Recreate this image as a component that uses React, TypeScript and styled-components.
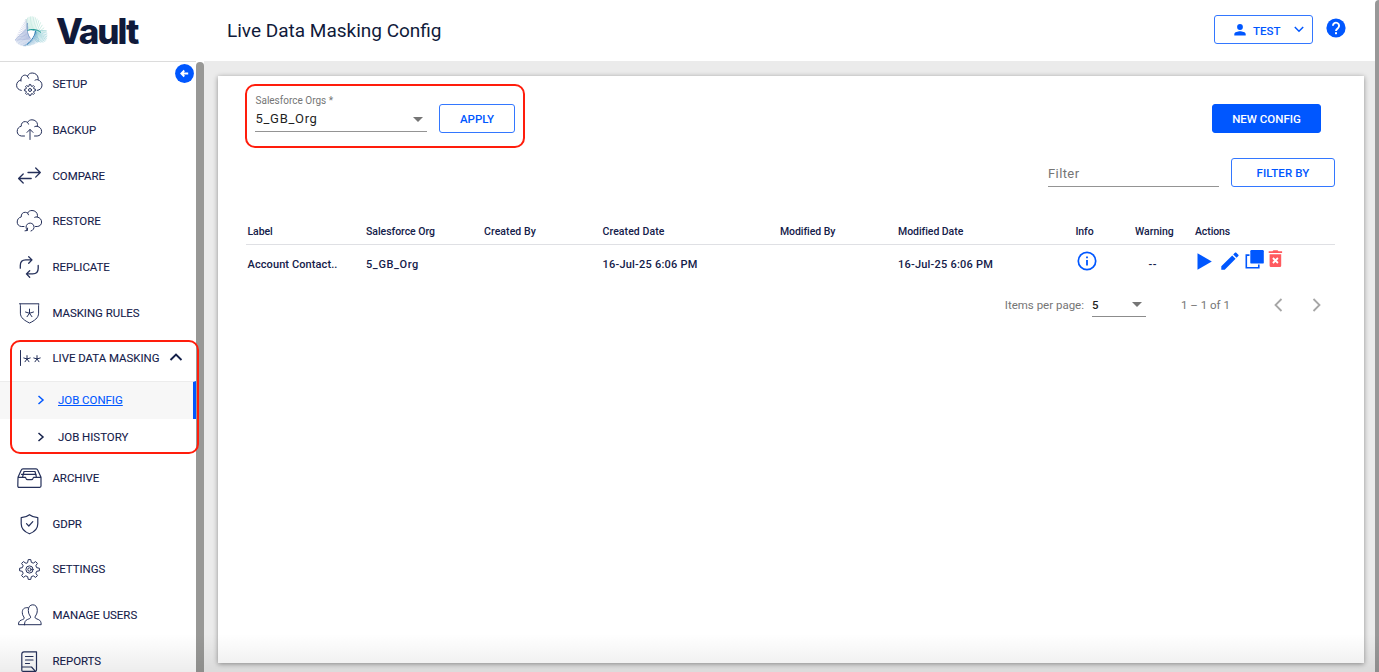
import React from 'react';
import styled, { createGlobalStyle } from 'styled-components';

const navy = '#14204a';
const dark = '#101a3a';
const blue = '#0057ff';

const Global = createGlobalStyle`
  * { box-sizing: border-box; }
  body { margin: 0; background: #fff; font-family: Roboto, sans-serif; color: ${navy}; overflow: hidden; }
  svg { display: block; flex: none; }
`;

const Page = styled.div`
  position: relative;
  display: flex;
  width: 1379px;
  height: 672px;
  overflow: hidden;
`;
const Shell = styled.div`
  flex: 1;
  display: flex;
  flex-direction: column;
  min-width: 0;
`;
const PageScrollbar = styled.div`
  width: 4px;
  background: #989898;
  border-top-left-radius: 4px;
`;

/* header */
const Header = styled.header`
  height: 61px;
  flex: none;
  display: flex;
  align-items: center;
  background: #fff;
`;
const Brand = styled.div`
  width: 227px;
  display: flex;
  align-items: center;
  gap: 7px;
  padding-left: 15px;
  color: ${dark};
`;
const BrandName = styled.span`
  padding-top: 1px;
  font: 800 35px/39px Inter, sans-serif;
  letter-spacing: -2px;
`;
const Title = styled.h1`
  margin: 0;
  font-weight: 400;
  font-size: 19px;
  line-height: 24px;
  flex: 1;
  color: ${dark};
`;
const UserButton = styled.button`
  width: 99px;
  height: 29px;
  margin: 0 13px 2px 0;
  padding: 0 8px 0 18px;
  display: flex;
  align-items: center;
  background: #fff;
  border: 1px solid #3377ff;
  border-radius: 3px;
  color: ${blue};
  font: 500 11.5px/14px Roboto, sans-serif;
`;
const UserName = styled.span`
  flex: 1;
  padding: 2px 0 0 6px;
  text-align: left;
`;
const Help = styled.div`
  margin: 0 29px 5px 0;
`;

/* sidebar */
const Body = styled.div`
  flex: 1;
  display: flex;
  min-height: 0;
`;
const Sidebar = styled.nav`
  position: relative;
  width: 196px;
  border-top: 1px solid #dcdcdc;
  background: #fff;
  overflow: hidden;
`;
const SideScrollbar = styled.div`
  width: 8px;
  margin-top: 1px;
  background: #989896;
  border-radius: 4px 4px 0 0;
`;
const NavItem = styled.div`
  height: 45.7px;
  display: flex;
  align-items: center;
  padding-left: 15px;
  font-size: 11.43px;
  line-height: 14px;
  -webkit-text-stroke: 0.1px ${navy};
`;
const NavList = styled.div`
  margin-top: -0.6px;
`;
const NavIcon = styled.span`
  width: 28px;
  margin-right: 9.4px;
`;
const Caret = styled.span`
  margin: -2px 0 0 9px;
`;
const SubItem = styled.div<{ $active?: boolean }>`
  height: ${p => (p.$active ? 38 : 35.9)}px;
  display: flex;
  align-items: center;
  gap: 13px;
  padding-left: 37px;
  font-size: 11.43px;
  line-height: 14px;
  color: ${p => (p.$active ? blue : navy)};
  background: ${p => (p.$active ? '#f7f7f7' : 'transparent')};
  border-top: ${p => (p.$active ? '1px solid #ececec' : 'none')};
  border-right: ${p => (p.$active ? `3px solid ${blue}` : 'none')};
  text-decoration: ${p => (p.$active ? 'underline' : 'none')};
  text-underline-offset: 1px;
  padding-bottom: ${p => (p.$active ? 1 : 0)}px;
  -webkit-text-stroke: 0.1px currentColor;
`;
const Collapse = styled.div`
  position: absolute;
  right: 2px;
  top: 2px;
`;

/* content */
const Main = styled.main`
  flex: 1;
  padding: 15px 11px 9px 14px;
  background: #ebebeb;
  display: flex;
`;
const Card = styled.section`
  flex: 1;
  background: #fff;
  box-shadow: 0 1px 5px rgba(0, 0, 0, 0.4);
  display: flex;
  flex-direction: column;
`;
const OrgRow = styled.div`
  height: 57px;
  padding: 0 43px 0 37px;
  display: flex;
  align-items: flex-end;
`;
const Button = styled.button<{ $w: number; $solid?: boolean; $ls?: number }>`
  width: ${p => p.$w}px;
  height: 29px;
  padding: 1px 0 0;
  border: 1px solid ${p => (p.$solid ? blue : '#3377ff')};
  border-radius: 3px;
  background: ${p => (p.$solid ? blue : '#fff')};
  color: ${p => (p.$solid ? '#fff' : blue)};
  font: 500 11.5px/14px Roboto, sans-serif;
  letter-spacing: ${p => p.$ls ?? 0}px;
`;
const OrgField = styled.div`
  width: 172px;
  height: 39px;
  margin: 0 12px 1px 0;
  padding-left: 0.5px;
  border-bottom: 1px solid #949494;
  display: flex;
  flex-direction: column;
`;
const FieldLabel = styled.span`
  padding-top: 1px;
  font-size: 10px;
  line-height: 14px;
  color: #757575;
`;
const OrgValue = styled.div`
  display: flex;
  align-items: center;
  justify-content: space-between;
  padding: 3px 4px 0 0;
  font-size: 13px;
  line-height: 16px;
  letter-spacing: 0.7px;
  color: #1f1f1f;
`;
const Grow = styled.div`
  flex: 1;
`;
const FilterRow = styled.div`
  margin-top: 25px;
  padding-right: 29px;
  display: flex;
  justify-content: flex-end;
  gap: 12px;
`;
const FilterField = styled.div`
  width: 171px;
  height: 29px;
  padding-top: 7px;
  border-bottom: 1px solid #949494;
  font-size: 13px;
  line-height: 17px;
  letter-spacing: 0.4px;
  color: #757575;
`;
const Table = styled.div`
  margin: 30px 29px 0 28px;
`;
const Row = styled.div<{ $head?: boolean }>`
  display: grid;
  grid-template-columns: 118.5px 118px 118.5px 177.5px 118px 177.5px 59.500px 60px 1fr;
  padding-left: 1.5px;
  height: ${p => (p.$head ? 28 : 38)}px;
  border-bottom: ${p => (p.$head ? '1.5px solid #dfe0e4' : 'none')};
  font-weight: 500;
  font-size: ${p => (p.$head ? 10.5 : 11)}px;
  line-height: ${p => (p.$head ? 29 : 39)}px;
`;
const Cell = styled.span<{ $ls?: number }>`
  letter-spacing: ${p => p.$ls ?? 0}px;
  white-space: nowrap;
`;
const InfoCell = styled.span`
  padding: 6px 0 0 1px;
`;
const WarnCell = styled.span`
  padding-left: 13.5px;
  letter-spacing: 0.5px;
`;
const Actions = styled.span`
  display: flex;
  align-items: flex-start;
  padding: 4px 0 0 2px;
`;
const Paginator = styled.div`
  margin-top: 10px;
  padding-right: 43px;
  height: 24px;
  display: flex;
  justify-content: flex-end;
  align-items: center;
  font-size: 11.5px;
  line-height: 14px;
  color: #757575;
`;
const PageSize = styled.span`
  width: 54px;
  height: 23px;
  margin: 0 35px 0 8px;
  padding-right: 4px;
  display: flex;
  align-items: center;
  justify-content: space-between;
  border-bottom: 1px solid #8c8c8c;
  color: #1f1f1f;
  font-weight: 500;
`;
const Range = styled.span`
  width: 93px;
`;
const Arrows = styled.span`
  display: flex;
  gap: 29px;
  color: #a6a6a6;
`;
const BottomFade = styled.div`
  position: absolute;
  left: 0;
  right: 0;
  bottom: 0;
  height: 38px;
  background: linear-gradient(rgba(0, 0, 0, 0), rgba(0, 0, 0, 0.07));
`;
const Highlight = styled.div<{ $x: number; $y: number; $w: number; $h: number; $r: number }>`
  position: absolute;
  left: ${p => p.$x}px;
  top: ${p => p.$y}px;
  width: ${p => p.$w}px;
  height: ${p => p.$h}px;
  border: 2px solid #ff1d0c;
  border-radius: ${p => p.$r}px;
`;

const Line = ({ children, w = 1 }: { children: React.ReactNode; w?: number }) => (
  <svg width="28" height="28" viewBox="0 0 28 28" fill="none" stroke="#25305a" strokeWidth={w} strokeLinecap="round" strokeLinejoin="round">
    {children}
  </svg>
);

const gear = (cx: number, cy: number, r1: number, r2: number, n: number) => {
  const pts: string[] = [];
  for (let i = 0; i < n; i++) {
    [[-0.32, r1], [-0.16, r2], [0.16, r2], [0.32, r1]].forEach(([o, r]) => {
      const a = ((i + o) / n) * 2 * Math.PI - Math.PI / 2;
      pts.push(`${(cx + r * Math.cos(a)).toFixed(2)} ${(cy + r * Math.sin(a)).toFixed(2)}`);
    });
  }
  return `M${pts.join('L')}Z`;
};

const star = (cx: number, cy: number, r: number) =>
  [0, 1, 2, 3, 4]
    .map(i => {
      const a = (i / 5) * 2 * Math.PI - Math.PI / 2;
      return `M${cx} ${cy}L${(cx + r * Math.cos(a)).toFixed(2)} ${(cy + r * Math.sin(a)).toFixed(2)}`;
    })
    .join('');

const icons: Record<string, React.ReactNode> = {
  setup: (
    <Line>
      <path d="M6.300 20.400C3.600 19.900 1.600 18.200 1.600 15.300c0-2.900 2-4.800 4.300-5.200C6 6.600 8.300 4.800 10.600 5.200c.8.2 1.400.6 1.800 1.100C13.500 4 15 3 17.200 3c3.200 0 5.600 2 6 5.200 0 .6-.1 1.100-.3 1.600 2.400.8 4.100 2.800 4.100 5.300 0 3-2 4.900-4.700 5.300" />
      <path d="M12.400 6.300c.6.500 1 1.200 1.200 1.900M20 10.200c.9-.6 1.900-.7 2.900-.4M5.900 10.100l.1 1" />
      <path d={gear(15, 20, 4.2, 5.6, 8)} />
      <circle cx="15" cy="20" r="1.500" />
    </Line>
  ),
  backup: (
    <Line>
      <path d="M9.500 20H6.300C3.700 19.700 2.200 17.700 2.200 15.300c0-2.700 1.700-4.600 4-5-.2-3 1.800-5 4.200-4.700.9.1 1.600.4 2.100.8C13.500 4.600 15 3.800 17 3.800c3 0 5.300 2 5.500 4.800 0 .6-.1 1.200-.3 1.700 2.700.6 4.400 2.600 4.400 5 0 2.700-1.800 4.500-4.400 4.700h-2.700" />
      <path d="M12.500 6.400c.5.500.8 1 1 1.700M19.700 10.600c.8-.4 1.600-.5 2.500-.3" />
      <path d="M15 23.500v-9.800M12 16.400l3-3 3 3" />
    </Line>
  ),
  compare: (
    <Line w={1.3}>
      <path d="M13 10.500h12.300M20.700 6l4.600 4.500-4.600 4.600M16.200 16.500H3.800M8.200 12l-4.600 4.500L8.200 21" />
    </Line>
  ),
  restore: (
    <Line>
      <path d="M9 19.500H6.300C3.700 19.200 2.200 17.400 2.200 15c0-2.700 1.700-4.600 4-5-.2-3 1.800-5 4.200-4.700.9.1 1.600.4 2.100.8C13.500 4.300 15 3.500 17 3.500c3 0 5.300 2 5.500 4.800 0 .6-.1 1.200-.3 1.700 2.700.6 4.400 2.600 4.400 5 0 2.700-1.800 4.300-4.400 4.500h-1.700" />
      <path d="M12.500 6.100c.5.500.8 1 1 1.700M19.700 10.300c.8-.4 1.600-.5 2.500-.3" />
      <path d="M16 24a4 4 0 1 0-4.600-2.300l.8 1.600M10 23.800l2.300-.3.300-2.400" />
    </Line>
  ),
  replicate: (
    <Line w={1.3}>
      <path d="M5.300 15.200v-2.700c0-3.800 2-5.600 5.500-5.600h6M13.700 3.700l3.300 3.200-3.300 3.300M23.200 12.500v2.800c0 3.800-2 5.600-5.500 5.600h-6M14.700 17.700l-3.300 3.200 3.300 3.300" />
    </Line>
  ),
  mask: (
    <Line>
      <path d="M5 4.800h19c-.2.400-.4 1-.4 1.800v7.600c0 4.700-4.300 7.600-9 9.800-4.700-2.200-9.200-5.100-9.200-9.800V6.600c0-.8-.2-1.400-.4-1.800Z" />
      <path d={star(14.5, 14.3, 4.2)} />
    </Line>
  ),
  live: (
    <Line>
      <path d={`M5.500 6.500v15${star(12, 15, 3.4)}${star(22, 15, 3.4)}`} />
    </Line>
  ),
  archive: (
    <Line w={1.2}>
      <path d="M3 13.300h7.500c.4 1.700 1.200 2.300 2.300 2.300h3.400c1.100 0 1.900-.6 2.300-2.300H26v8.800c0 .7-.5 1.200-1.200 1.200H4c-.7 0-1.200-.5-1.200-1.200ZM3 13.300 6.300 6c.3-.8.8-1.200 1.600-1.200h13.200c.8 0 1.300.4 1.600 1.200l3.300 7.300M7.700 12.500 9 7.500h11l1.300 5M6.500 10.300h1.700M8.500 10.300h12.700" />
    </Line>
  ),
  gdpr: (
    <Line w={1.2}>
      <path d="M14.500 4.700c2.400 1.900 5 2.800 8.300 3v6c0 4.700-3.300 8.100-8.300 10.100-5-2-8.300-5.400-8.300-10.100v-6c3.300-.2 5.900-1.100 8.300-3Z" />
      <path d="m11.500 13.700 2.300 2.300 4-4.300" />
    </Line>
  ),
  settings: (
    <Line>
      <path d={gear(14.5, 14.5, 7.4, 10, 8)} />
      <circle cx="14.500" cy="14.500" r="3.600" />
      <circle cx="14.500" cy="14.500" r="1.700" />
    </Line>
  ),
  users: (
    <Line>
      <path d="M9.500 23.700h16.700c-.1-3-.8-4.300-2.900-5.200-1.900-.8-3.300-1.100-3.300-2.300 0-1.400 2.300-2.500 2.300-6.700 0-3.600-1.700-5.700-4.500-5.700s-4.500 2.100-4.500 5.700c0 4.200 2.300 5.300 2.300 6.700 0 1.200-1.300 1.500-3.200 2.300-2.100.9-2.800 2.200-2.900 5.200Z" />
      <path d="M12.800 6.700c-3.800-.5-5.600 1.600-5.500 5 .1 3.300 1.900 3.900 1.900 5.300 0 1.200-1.300 1.400-2.900 2.100-2.200.9-2.700 2-2.800 4.600h6" />
    </Line>
  ),
  reports: (
    <Line w={1.2}>
      <path d="M9 4.800h12.500v18c0 .8-.3 1.500-1 1.500L16.500 20H6.800V7c0-1.400.8-2.200 2.200-2.200ZM6.800 20v3.200c0 .8.500 1.200 1.200 1.200h12.500M10.500 9.500h7.500M10.500 13h7.500M10.500 16.500h4" />
    </Line>
  ),
};

const Item = ({ icon, children }: { icon: string; children: React.ReactNode }) => (
  <NavItem>
    <NavIcon>{icons[icon]}</NavIcon>
    {children}
  </NavItem>
);

const Chevron = ({ d, w, h, sw = 1.5 }: { d: string; w: number; h: number; sw?: number }) => (
  <svg width={w} height={h} viewBox={`0 0 ${w} ${h}`} fill="none" stroke="currentColor" strokeWidth={sw}>
    <path d={d} />
  </svg>
);

const Triangle = () => (
  <svg width="10" height="5" viewBox="0 0 10 5"><path d="M0 0h10L5 5Z" fill="#757575" /></svg>
);

type Pt = [number, number];
const quad = (a: Pt, b: Pt, c: Pt, t: number): Pt => [
  (1 - t) ** 2 * a[0] + 2 * t * (1 - t) * b[0] + t * t * c[0],
  (1 - t) ** 2 * a[1] + 2 * t * (1 - t) * b[1] + t * t * c[1],
];
/* each blade is a fan of fine threads from an outer curve to an inner edge */
const blades: { outer: [Pt, Pt, Pt]; inner: [Pt, Pt, Pt]; color: string }[] = [
  { outer: [[11, 5], [20, -4], [31, 17]], inner: [[12.3, 17], [17, 15], [27, 17]], color: '#6cc7ae' },
  { outer: [[32, 17], [34, 31], [22, 28]], inner: [[14, 15.5], [21, 15], [19, 24]], color: '#2f9fae' },
  { outer: [[24, 28], [15, 33], [8, 32]], inner: [[21, 18], [19, 25], [14, 29]], color: '#4a8fc0' },
  { outer: [[11, 5], [5, 14], [0, 26]], inner: [[13, 14], [13, 20], [15.500, 25]], color: '#8f9bcf' },
  { outer: [[0, 26], [3, 32], [10, 32]], inner: [[11, 15], [12, 21], [15.500, 25]], color: '#5d7fbd' },
];
const Logo = () => (
  <svg width="34" height="34" viewBox="0 0 34 34" fill="none" strokeWidth="0.55">
    {blades.map(({ outer, inner, color }, k) =>
      Array.from({ length: 13 }, (_, i) => {
        const [x1, y1] = quad(...outer, i / 12);
        const [x2, y2] = quad(...inner, i / 12);
        return <path key={`${k}-${i}`} d={`M${x1} ${y1}L${x2} ${y2}`} stroke={color} opacity={0.6} />;
      }),
    )}
    <path d="M12.300 16.700H20.500L15.700 24.600Z" fill="#fff" />
    <path d="M12.300 16.700C16 14.800 22 15 26 18.500" stroke="#1f9a94" strokeWidth="1" />
    <path d="M20.500 16.700C20.500 21 17 26 12 30.500" stroke="#2c78b4" strokeWidth="1" />
    <path d="M15.700 24.600C12.500 21.500 11.500 16 12.500 9" stroke="#5f86bd" strokeWidth="0.700" />
  </svg>
);

export default function App() {
  return (
    <>
      <Global />
      <Page>
        <Shell>
          <Header>
            <Brand>
              <Logo />
              <BrandName>Vault</BrandName>
            </Brand>
            <Title>Live Data Masking Config</Title>
            <UserButton>
              <svg width="14" height="14" viewBox="0 0 14 14" fill={blue}>
                <circle cx="7" cy="4" r="2.900" />
                <path d="M1.300 12.500v-1.400C1.300 9.200 5 8.300 7 8.300s5.700.9 5.700 2.800v1.400Z" />
              </svg>
              <UserName>TEST</UserName>
              <Chevron w={10} h={7} d="M.8 1l4.200 4.200L9.200 1" />
            </UserButton>
            <Help>
              <svg width="20" height="20" viewBox="0 0 20 20">
                <circle cx="10" cy="10" r="9.600" fill={blue} />
                <path d="M6.900 7.700a3.100 3.100 0 1 1 5 2.500c-1.100.9-1.900 1.400-1.900 2.800" fill="none" stroke="#fff" strokeWidth="1.900" />
                <rect x="9" y="14.200" width="2" height="2" fill="#fff" />
              </svg>
            </Help>
          </Header>
          <Body>
            <Sidebar>
              <NavList>
                <Item icon="setup">SETUP</Item>
                <Item icon="backup">BACKUP</Item>
                <Item icon="compare">COMPARE</Item>
                <Item icon="restore">RESTORE</Item>
                <Item icon="replicate">REPLICATE</Item>
                <Item icon="mask">MASKING RULES</Item>
                <Item icon="live">
                  LIVE DATA MASKING
                  <Caret><Chevron w={14} h={8} sw={1.9} d="M1.500 7 7 1.500 12.500 7" /></Caret>
                </Item>
                <SubItem $active>
                  <Chevron w={8} h={10} d="M1.500 1l4.500 4-4.500 4" />
                  JOB CONFIG
                </SubItem>
                <SubItem>
                  <Chevron w={8} h={10} d="M1.500 1l4.500 4-4.500 4" />
                  JOB HISTORY
                </SubItem>
                <Item icon="archive">ARCHIVE</Item>
                <Item icon="gdpr">GDPR</Item>
                <Item icon="settings">SETTINGS</Item>
                <Item icon="users">MANAGE USERS</Item>
                <Item icon="reports">REPORTS</Item>
              </NavList>
              <Collapse>
                <svg width="19" height="19" viewBox="0 0 19 19">
                  <circle cx="9.500" cy="9.500" r="9.400" fill={blue} />
                  <path d="M13.200 9.500H6.700M9.300 6.500 6.300 9.500l3 3" fill="none" stroke="#fff" strokeWidth="1.800" />
                </svg>
              </Collapse>
            </Sidebar>
            <SideScrollbar />
            <Main>
              <Card>
                <OrgRow>
                  <OrgField>
                    <FieldLabel>Salesforce Orgs *</FieldLabel>
                    <OrgValue>5_GB_Org<Triangle /></OrgValue>
                  </OrgField>
                  <Button $w={76}>APPLY</Button>
                  <Grow />
                  <Button $w={109} $solid>NEW CONFIG</Button>
                </OrgRow>
                <FilterRow>
                  <FilterField>Filter</FilterField>
                  <Button $w={104} $ls={0.11}>FILTER BY</Button>
                </FilterRow>
                <Table>
                  <Row $head>
                    <Cell $ls={-0.1}>Label</Cell>
                    <Cell $ls={-0.04}>Salesforce Org</Cell>
                    <Cell $ls={0.08}>Created By</Cell>
                    <Cell $ls={0.08}>Created Date</Cell>
                    <Cell $ls={-0.07}>Modified By</Cell>
                    <Cell $ls={-0.05}>Modified Date</Cell>
                    <Cell $ls={-0.1}>Info</Cell>
                    <Cell>Warning</Cell>
                    <Cell $ls={-0.1}>Actions</Cell>
                  </Row>
                  <Row>
                    <Cell $ls={0.1}>Account Contact..</Cell>
                    <Cell $ls={0.6}>5_GB_Org</Cell>
                    <Cell />
                    <Cell $ls={0.22}>16-Jul-25 6:06 PM</Cell>
                    <Cell />
                    <Cell $ls={0.22}>16-Jul-25 6:06 PM</Cell>
                    <InfoCell>
                      <svg width="20" height="20" viewBox="0 0 20 20" fill="none" stroke={blue} strokeWidth="1.700">
                        <circle cx="10" cy="10" r="8.700" />
                        <path d="M10 9v5.500M10 5.400v1.900" strokeWidth="1.800" />
                      </svg>
                    </InfoCell>
                    <WarnCell>--</WarnCell>
                    <Actions>
                      <svg width="88" height="22" viewBox="0 0 88 22" fill={blue}>
                        <path d="M.5 4.200v16.600L14.800 12.500Z" />
                        <path d="M24.300 17.300 35.200 6.400l3.400 3.400-10.900 10.900h-3.400ZM36.200 5.400l1.700-1.700c.4-.4 1-.4 1.400 0l2 2c.4.4.4 1 0 1.400l-1.700 1.700Z" />
                        <path d="M52.500 6.100h-3.200v12.600h12.500V15.500" fill="none" stroke={blue} strokeWidth="1.600" />
                        <rect x="53.300" y="1.100" width="13.500" height="13.500" rx="1.200" />
                        <path d="M71.700 2.300h3.800l.9-1h4.200l.9 1h3.600v1.700H71.700ZM72.600 5.200h11.600v11.200c0 1-.7 1.700-1.700 1.700h-8.200c-1 0-1.700-.7-1.700-1.700Z" fill="#ff5a5f" />
                        <path d="m75.900 9 5 5M80.900 9l-5 5" stroke="#fff" strokeWidth="1.800" />
                      </svg>
                    </Actions>
                  </Row>
                </Table>
                <Paginator>
                  Items per page:
                  <PageSize>5<Triangle /></PageSize>
                  <Range>1 – 1 of 1</Range>
                  <Arrows>
                    <Chevron w={9} h={14} sw={1.8} d="M7.500 1 1.500 7l6 6" />
                    <Chevron w={9} h={14} sw={1.8} d="M1.500 1l6 6-6 6" />
                  </Arrows>
                </Paginator>
              </Card>
            </Main>
          </Body>
        </Shell>
        <PageScrollbar />
        <BottomFade />
        <Highlight $x={245} $y={84} $w={280} $h={64} $r={10} />
        <Highlight $x={10} $y={340} $w={189} $h={114} $r={10} />
      </Page>
    </>
  );
}
